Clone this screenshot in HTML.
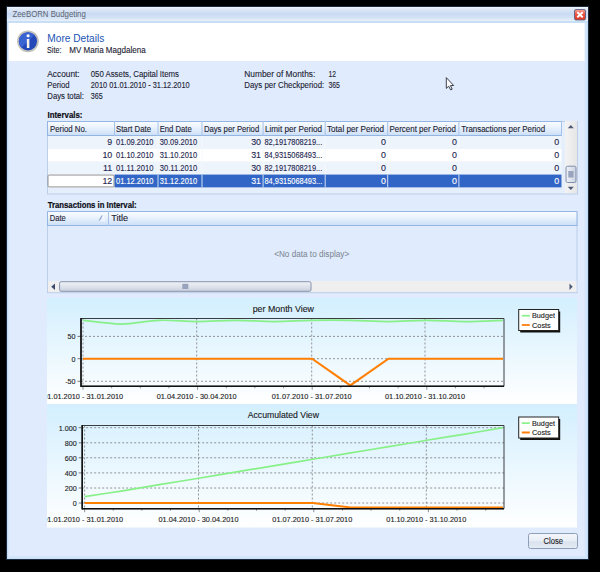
<!DOCTYPE html><html><head><meta charset="utf-8"><style>html,body{margin:0;padding:0;background:#000;width:600px;height:572px;overflow:hidden}</style></head><body><svg width="600" height="572" viewBox="0 0 600 572" style="display:block;font-family:'Liberation Sans', sans-serif"><defs>
<linearGradient id="tb" x1="0" y1="0" x2="0" y2="1">
 <stop offset="0" stop-color="#f4f8fd"/><stop offset="0.13" stop-color="#e0e9f6"/>
 <stop offset="0.45" stop-color="#c9dbf3"/><stop offset="0.7" stop-color="#d3e2f5"/><stop offset="0.88" stop-color="#e4edf8"/><stop offset="1" stop-color="#f2f7fd"/>
</linearGradient>
<linearGradient id="gh" x1="0" y1="0" x2="0" y2="1">
 <stop offset="0" stop-color="#fbfdff"/><stop offset="0.4" stop-color="#ebf3fd"/><stop offset="1" stop-color="#cadef8"/>
</linearGradient>
<linearGradient id="cbg" x1="0" y1="0" x2="0" y2="1">
 <stop offset="0" stop-color="#d3effe"/><stop offset="1" stop-color="#ffffff"/>
</linearGradient>
<linearGradient id="btn" x1="0" y1="0" x2="0" y2="1">
 <stop offset="0" stop-color="#f4f7fb"/><stop offset="0.5" stop-color="#e8eef6"/><stop offset="0.55" stop-color="#d9e2ee"/><stop offset="1" stop-color="#e4ebf4"/>
</linearGradient>
<linearGradient id="close" x1="0" y1="0" x2="0" y2="1">
 <stop offset="0" stop-color="#f7a296"/><stop offset="0.45" stop-color="#ea5444"/><stop offset="1" stop-color="#dc3a26"/>
</linearGradient>
<radialGradient id="info" cx="0.4" cy="0.35" r="0.7">
 <stop offset="0" stop-color="#5a8ae8"/><stop offset="1" stop-color="#1a3fa8"/>
</radialGradient>
<linearGradient id="sb" x1="0" y1="0" x2="1" y2="0">
 <stop offset="0" stop-color="#f3f3f3"/><stop offset="1" stop-color="#e6e6e6"/>
</linearGradient>
<linearGradient id="thumbh" x1="0" y1="0" x2="0" y2="1">
 <stop offset="0" stop-color="#eef1f6"/><stop offset="0.5" stop-color="#dfe4ec"/><stop offset="1" stop-color="#c9d1de"/>
</linearGradient>
<linearGradient id="thumbv" x1="0" y1="0" x2="1" y2="0">
 <stop offset="0" stop-color="#eef1f6"/><stop offset="0.5" stop-color="#dfe4ec"/><stop offset="1" stop-color="#c9d1de"/>
</linearGradient>
</defs>
<rect x="0" y="0" width="600" height="572" fill="#000" />
<rect x="6" y="6" width="583" height="554" fill="#1c2a3e" />
<rect x="7" y="7" width="581" height="552" fill="#bcd6f5" />
<rect x="7.6" y="7.6" width="579.8" height="551" fill="#d2e5fb" />
<rect x="7" y="7" width="581" height="15" fill="url(#tb)" />
<rect x="7" y="21" width="581" height="2" fill="#c6dff6" />
<rect x="8.7" y="23" width="575.9" height="533.2" fill="#e0ecfd" />
<rect x="8.7" y="23" width="575.9" height="38" fill="#ffffff" />
<rect x="574.5" y="9.5" width="11" height="10.5" fill="url(#close)" rx="1.5" stroke="#4d5a80" stroke-width="0.8"/>
<path d="M577.3 12.3 L582.7 17.3 M582.7 12.3 L577.3 17.3" stroke="#fff" stroke-width="1.9"/>
<text x="12.5" y="17.2" font-size="9" fill="#5c6370" textLength="73.3" lengthAdjust="spacingAndGlyphs" >ZeeBORN Budgeting</text>
<circle cx="27.95" cy="41.3" r="10.9" fill="#c4c2bc"/>
<circle cx="27.95" cy="41.3" r="9.1" fill="#2448b8"/>
<path d="M21.5 34.9 A9.1 9.1 0 0 1 34.4 34.9 L21.5 47.7 A9.1 9.1 0 0 1 21.5 34.9 Z" fill="#3a64d2"/>
<circle cx="28.1" cy="35.8" r="1.55" fill="#fff"/>
<rect x="26.85" y="39" width="2.5" height="9.1" fill="#fff" rx="0.6"/>
<rect x="27.6" y="39.8" width="1" height="7.5" fill="#efe6cc" />
<text x="47.3" y="42.4" font-size="10.5" fill="#2153b5" textLength="57" lengthAdjust="spacingAndGlyphs" >More Details</text>
<text x="47.1" y="52.7" font-size="8.9" fill="#1d1d33" stroke="#1d1d33" stroke-width="0.12" textLength="14.3" lengthAdjust="spacingAndGlyphs" >Site:</text>
<text x="69.2" y="52.5" font-size="8.9" fill="#1d1d33" stroke="#1d1d33" stroke-width="0.12" textLength="76.5" lengthAdjust="spacingAndGlyphs" >MV Maria Magdalena</text>
<text x="47.3" y="76.7" font-size="8.9" fill="#1d1d33" stroke="#1d1d33" stroke-width="0.12" textLength="32.4" lengthAdjust="spacingAndGlyphs" >Account:</text>
<text x="47.3" y="87.6" font-size="8.9" fill="#1d1d33" stroke="#1d1d33" stroke-width="0.12" textLength="22.3" lengthAdjust="spacingAndGlyphs" >Period</text>
<text x="47.3" y="98.7" font-size="8.9" fill="#1d1d33" stroke="#1d1d33" stroke-width="0.12" textLength="36.7" lengthAdjust="spacingAndGlyphs" >Days total:</text>
<text x="90.7" y="76.7" font-size="8.9" fill="#1d1d33" stroke="#1d1d33" stroke-width="0.12" textLength="88.3" lengthAdjust="spacingAndGlyphs" >050 Assets, Capital Items</text>
<text x="90.7" y="87.6" font-size="8.9" fill="#1d1d33" stroke="#1d1d33" stroke-width="0.12" textLength="99" lengthAdjust="spacingAndGlyphs" >2010 01.01.2010 - 31.12.2010</text>
<text x="90.7" y="98.7" font-size="8.9" fill="#1d1d33" stroke="#1d1d33" stroke-width="0.12" textLength="12" lengthAdjust="spacingAndGlyphs" >365</text>
<text x="244.3" y="76.7" font-size="8.9" fill="#1d1d33" stroke="#1d1d33" stroke-width="0.12" textLength="71" lengthAdjust="spacingAndGlyphs" >Number of Months:</text>
<text x="244.3" y="87.6" font-size="8.9" fill="#1d1d33" stroke="#1d1d33" stroke-width="0.12" textLength="80" lengthAdjust="spacingAndGlyphs" >Days per Checkperiod:</text>
<text x="328.4" y="76.7" font-size="8.9" fill="#1d1d33" stroke="#1d1d33" stroke-width="0.12" textLength="7.6" lengthAdjust="spacingAndGlyphs" >12</text>
<text x="328.4" y="87.6" font-size="8.9" fill="#1d1d33" stroke="#1d1d33" stroke-width="0.12" textLength="11.6" lengthAdjust="spacingAndGlyphs" >365</text>
<path d="M446.3 77.6 L446.3 88.4 L448.7 86.2 L450.6 89.9 L452.2 89.2 L450.4 85.6 L453.7 85.5 Z" fill="#fdfdfd" stroke="#3b404c" stroke-width="1" stroke-linejoin="round"/>
<text x="47.5" y="117.7" font-size="8.9" fill="#0c0c14" stroke="#0c0c14" stroke-width="0.2" textLength="35" lengthAdjust="spacingAndGlyphs" font-weight="bold" >Intervals:</text>
<rect x="47.5" y="121.5" width="530" height="72.5" fill="#e5eefb" stroke="#bccee8" stroke-width="1"/>
<rect x="47.5" y="121" width="514" height="15" fill="url(#gh)" />
<line x1="47" y1="121.5" x2="562" y2="121.5" stroke="#93b5e3" stroke-width="1"/>
<line x1="47.5" y1="121" x2="47.5" y2="136" stroke="#93b5e3" stroke-width="1"/>
<line x1="47" y1="135.5" x2="562" y2="135.5" stroke="#93b5e3" stroke-width="1"/>
<line x1="114.5" y1="121" x2="114.5" y2="136" stroke="#a6c2e8" stroke-width="1"/>
<line x1="158" y1="121" x2="158" y2="136" stroke="#a6c2e8" stroke-width="1"/>
<line x1="202" y1="121" x2="202" y2="136" stroke="#a6c2e8" stroke-width="1"/>
<line x1="263.1" y1="121" x2="263.1" y2="136" stroke="#a6c2e8" stroke-width="1"/>
<line x1="325.2" y1="121" x2="325.2" y2="136" stroke="#a6c2e8" stroke-width="1"/>
<line x1="387.7" y1="121" x2="387.7" y2="136" stroke="#a6c2e8" stroke-width="1"/>
<line x1="458.9" y1="121" x2="458.9" y2="136" stroke="#a6c2e8" stroke-width="1"/>
<line x1="561.5" y1="121" x2="561.5" y2="136" stroke="#a6c2e8" stroke-width="1"/>
<text x="50" y="131.8" font-size="8.9" fill="#1d1d33" stroke="#1d1d33" stroke-width="0.12" textLength="37" lengthAdjust="spacingAndGlyphs" >Period No.</text>
<text x="116" y="131.8" font-size="8.9" fill="#1d1d33" stroke="#1d1d33" stroke-width="0.12" textLength="35" lengthAdjust="spacingAndGlyphs" >Start Date</text>
<text x="159.7" y="131.8" font-size="8.9" fill="#1d1d33" stroke="#1d1d33" stroke-width="0.12" textLength="32" lengthAdjust="spacingAndGlyphs" >End Date</text>
<text x="203.9" y="131.8" font-size="8.9" fill="#1d1d33" stroke="#1d1d33" stroke-width="0.12" textLength="55.3" lengthAdjust="spacingAndGlyphs" >Days per Period</text>
<text x="265" y="131.8" font-size="8.9" fill="#1d1d33" stroke="#1d1d33" stroke-width="0.12" textLength="57" lengthAdjust="spacingAndGlyphs" >Limit per Period</text>
<text x="327" y="131.8" font-size="8.9" fill="#1d1d33" stroke="#1d1d33" stroke-width="0.12" textLength="57" lengthAdjust="spacingAndGlyphs" >Total per Period</text>
<text x="389.5" y="131.8" font-size="8.9" fill="#1d1d33" stroke="#1d1d33" stroke-width="0.12" textLength="66.3" lengthAdjust="spacingAndGlyphs" >Percent per Period</text>
<text x="461.2" y="131.8" font-size="8.9" fill="#1d1d33" stroke="#1d1d33" stroke-width="0.12" textLength="84" lengthAdjust="spacingAndGlyphs" >Transactions per Period</text>
<rect x="48" y="136.0" width="513.5" height="12.85" fill="#eef4fc" />
<line x1="158" y1="136.0" x2="158" y2="148.85" stroke="#f4f8fd" stroke-width="1"/>
<line x1="202" y1="136.0" x2="202" y2="148.85" stroke="#f4f8fd" stroke-width="1"/>
<line x1="263.1" y1="136.0" x2="263.1" y2="148.85" stroke="#f4f8fd" stroke-width="1"/>
<line x1="325.2" y1="136.0" x2="325.2" y2="148.85" stroke="#f4f8fd" stroke-width="1"/>
<line x1="387.7" y1="136.0" x2="387.7" y2="148.85" stroke="#f4f8fd" stroke-width="1"/>
<line x1="458.9" y1="136.0" x2="458.9" y2="148.85" stroke="#f4f8fd" stroke-width="1"/>
<text x="112.3" y="145.4" font-size="8.9" fill="#24264f" stroke="#24264f" stroke-width="0.12" text-anchor="end" >9</text>
<text x="116" y="145.4" font-size="8.9" fill="#24264f" stroke="#24264f" stroke-width="0.12" textLength="37.5" lengthAdjust="spacingAndGlyphs" >01.09.2010</text>
<text x="159.7" y="145.4" font-size="8.9" fill="#24264f" stroke="#24264f" stroke-width="0.12" textLength="37.5" lengthAdjust="spacingAndGlyphs" >30.09.2010</text>
<text x="261" y="145.4" font-size="8.9" fill="#24264f" stroke="#24264f" stroke-width="0.12" text-anchor="end" >30</text>
<text x="264.5" y="145.4" font-size="8.9" fill="#24264f" stroke="#24264f" stroke-width="0.12" textLength="57.7" lengthAdjust="spacingAndGlyphs" >82,1917808219...</text>
<text x="386" y="145.4" font-size="8.9" fill="#24264f" stroke="#24264f" stroke-width="0.12" text-anchor="end" >0</text>
<text x="457" y="145.4" font-size="8.9" fill="#24264f" stroke="#24264f" stroke-width="0.12" text-anchor="end" >0</text>
<text x="559.2" y="145.4" font-size="8.9" fill="#24264f" stroke="#24264f" stroke-width="0.12" text-anchor="end" >0</text>
<rect x="48" y="148.85" width="513.5" height="12.85" fill="#ffffff" />
<line x1="158" y1="148.85" x2="158" y2="161.7" stroke="#f4f8fd" stroke-width="1"/>
<line x1="202" y1="148.85" x2="202" y2="161.7" stroke="#f4f8fd" stroke-width="1"/>
<line x1="263.1" y1="148.85" x2="263.1" y2="161.7" stroke="#f4f8fd" stroke-width="1"/>
<line x1="325.2" y1="148.85" x2="325.2" y2="161.7" stroke="#f4f8fd" stroke-width="1"/>
<line x1="387.7" y1="148.85" x2="387.7" y2="161.7" stroke="#f4f8fd" stroke-width="1"/>
<line x1="458.9" y1="148.85" x2="458.9" y2="161.7" stroke="#f4f8fd" stroke-width="1"/>
<text x="112.3" y="158.25" font-size="8.9" fill="#24264f" stroke="#24264f" stroke-width="0.12" text-anchor="end" >10</text>
<text x="116" y="158.25" font-size="8.9" fill="#24264f" stroke="#24264f" stroke-width="0.12" textLength="37.5" lengthAdjust="spacingAndGlyphs" >01.10.2010</text>
<text x="159.7" y="158.25" font-size="8.9" fill="#24264f" stroke="#24264f" stroke-width="0.12" textLength="37.5" lengthAdjust="spacingAndGlyphs" >31.10.2010</text>
<text x="261" y="158.25" font-size="8.9" fill="#24264f" stroke="#24264f" stroke-width="0.12" text-anchor="end" >31</text>
<text x="264.5" y="158.25" font-size="8.9" fill="#24264f" stroke="#24264f" stroke-width="0.12" textLength="57.7" lengthAdjust="spacingAndGlyphs" >84,9315068493...</text>
<text x="386" y="158.25" font-size="8.9" fill="#24264f" stroke="#24264f" stroke-width="0.12" text-anchor="end" >0</text>
<text x="457" y="158.25" font-size="8.9" fill="#24264f" stroke="#24264f" stroke-width="0.12" text-anchor="end" >0</text>
<text x="559.2" y="158.25" font-size="8.9" fill="#24264f" stroke="#24264f" stroke-width="0.12" text-anchor="end" >0</text>
<rect x="48" y="161.7" width="513.5" height="12.85" fill="#eef4fc" />
<line x1="158" y1="161.7" x2="158" y2="174.54999999999998" stroke="#f4f8fd" stroke-width="1"/>
<line x1="202" y1="161.7" x2="202" y2="174.54999999999998" stroke="#f4f8fd" stroke-width="1"/>
<line x1="263.1" y1="161.7" x2="263.1" y2="174.54999999999998" stroke="#f4f8fd" stroke-width="1"/>
<line x1="325.2" y1="161.7" x2="325.2" y2="174.54999999999998" stroke="#f4f8fd" stroke-width="1"/>
<line x1="387.7" y1="161.7" x2="387.7" y2="174.54999999999998" stroke="#f4f8fd" stroke-width="1"/>
<line x1="458.9" y1="161.7" x2="458.9" y2="174.54999999999998" stroke="#f4f8fd" stroke-width="1"/>
<text x="112.3" y="171.1" font-size="8.9" fill="#24264f" stroke="#24264f" stroke-width="0.12" text-anchor="end" >11</text>
<text x="116" y="171.1" font-size="8.9" fill="#24264f" stroke="#24264f" stroke-width="0.12" textLength="37.5" lengthAdjust="spacingAndGlyphs" >01.11.2010</text>
<text x="159.7" y="171.1" font-size="8.9" fill="#24264f" stroke="#24264f" stroke-width="0.12" textLength="37.5" lengthAdjust="spacingAndGlyphs" >30.11.2010</text>
<text x="261" y="171.1" font-size="8.9" fill="#24264f" stroke="#24264f" stroke-width="0.12" text-anchor="end" >30</text>
<text x="264.5" y="171.1" font-size="8.9" fill="#24264f" stroke="#24264f" stroke-width="0.12" textLength="57.7" lengthAdjust="spacingAndGlyphs" >82,1917808219...</text>
<text x="386" y="171.1" font-size="8.9" fill="#24264f" stroke="#24264f" stroke-width="0.12" text-anchor="end" >0</text>
<text x="457" y="171.1" font-size="8.9" fill="#24264f" stroke="#24264f" stroke-width="0.12" text-anchor="end" >0</text>
<text x="559.2" y="171.1" font-size="8.9" fill="#24264f" stroke="#24264f" stroke-width="0.12" text-anchor="end" >0</text>
<rect x="48" y="174.55" width="513.5" height="12.85" fill="#ffffff" />
<rect x="114.5" y="174.55" width="447" height="12.85" fill="#3166c6" />
<rect x="48" y="175.05" width="66" height="11.85" fill="#ffffff" stroke="#7a7a7a" stroke-width="0.8" rx="1"/>
<line x1="158" y1="174.55" x2="158" y2="187.4" stroke="#cfe0f5" stroke-width="1"/>
<line x1="202" y1="174.55" x2="202" y2="187.4" stroke="#cfe0f5" stroke-width="1"/>
<line x1="263.1" y1="174.55" x2="263.1" y2="187.4" stroke="#cfe0f5" stroke-width="1"/>
<line x1="325.2" y1="174.55" x2="325.2" y2="187.4" stroke="#cfe0f5" stroke-width="1"/>
<line x1="387.7" y1="174.55" x2="387.7" y2="187.4" stroke="#cfe0f5" stroke-width="1"/>
<line x1="458.9" y1="174.55" x2="458.9" y2="187.4" stroke="#cfe0f5" stroke-width="1"/>
<text x="112.3" y="183.95000000000002" font-size="8.9" fill="#24264f" stroke="#24264f" stroke-width="0.12" text-anchor="end" >12</text>
<text x="116" y="183.95000000000002" font-size="8.9" fill="#ffffff" stroke="#ffffff" stroke-width="0.12" textLength="37.5" lengthAdjust="spacingAndGlyphs" >01.12.2010</text>
<text x="159.7" y="183.95000000000002" font-size="8.9" fill="#ffffff" stroke="#ffffff" stroke-width="0.12" textLength="37.5" lengthAdjust="spacingAndGlyphs" >31.12.2010</text>
<text x="261" y="183.95000000000002" font-size="8.9" fill="#ffffff" stroke="#ffffff" stroke-width="0.12" text-anchor="end" >31</text>
<text x="264.5" y="183.95000000000002" font-size="8.9" fill="#ffffff" stroke="#ffffff" stroke-width="0.12" textLength="57.7" lengthAdjust="spacingAndGlyphs" >84,9315068493...</text>
<text x="386" y="183.95000000000002" font-size="8.9" fill="#ffffff" stroke="#ffffff" stroke-width="0.12" text-anchor="end" >0</text>
<text x="457" y="183.95000000000002" font-size="8.9" fill="#ffffff" stroke="#ffffff" stroke-width="0.12" text-anchor="end" >0</text>
<text x="559.2" y="183.95000000000002" font-size="8.9" fill="#ffffff" stroke="#ffffff" stroke-width="0.12" text-anchor="end" >0</text>
<rect x="565" y="121" width="12" height="72" fill="url(#sb)" />
<path d="M567.8 128.3 L570.8 125 L573.8 128.3 Z" fill="#4d5a75"/>
<path d="M567.8 186.8 L570.8 190 L573.8 186.8 Z" fill="#4d5a75"/>
<rect x="566" y="166.2" width="10" height="16.3" fill="url(#thumbv)" stroke="#7584a8" stroke-width="0.9" rx="1.5"/>
<rect x="568.3" y="171" width="5.2" height="6.5" fill="#98a4bd" />
<text x="47.7" y="207.7" font-size="8.9" fill="#0c0c14" stroke="#0c0c14" stroke-width="0.2" textLength="89" lengthAdjust="spacingAndGlyphs" font-weight="bold" >Transactions in Interval:</text>
<rect x="47.5" y="211.5" width="529.5" height="81.2" fill="#e0ecfd" stroke="#bccee8" stroke-width="1"/>
<rect x="47.5" y="211" width="529.5" height="15" fill="url(#gh)" />
<path d="M47.5 226 L47.5 211.5 L577 211.5 M577 211.5 L577 226" fill="none" stroke="#93b5e3" stroke-width="1"/>
<line x1="47" y1="225.5" x2="577" y2="225.5" stroke="#93b5e3" stroke-width="1"/>
<line x1="108.5" y1="211" x2="108.5" y2="226" stroke="#a6c2e8" stroke-width="1"/>
<text x="49.8" y="221.2" font-size="8.9" fill="#1d1d33" stroke="#1d1d33" stroke-width="0.12" textLength="16" lengthAdjust="spacingAndGlyphs" >Date</text>
<path d="M99.3 220.6 L102.4 215.2" stroke="#8ba3d3" stroke-width="1.1"/><path d="M102.6 215.6 L104.6 220.4 L100.5 220.4" fill="none" stroke="#ffffff" stroke-width="0.8"/>
<text x="111.2" y="221.2" font-size="8.9" fill="#1d1d33" stroke="#1d1d33" stroke-width="0.12" textLength="17" lengthAdjust="spacingAndGlyphs" >Title</text>
<text x="274.2" y="256.8" font-size="8.9" fill="#7f8794" stroke="#7f8794" stroke-width="0.05" textLength="75" lengthAdjust="spacingAndGlyphs" >&lt;No data to display&gt;</text>
<rect x="48" y="281" width="528.5" height="11" fill="#efefef" />
<path d="M55 283.6 L51.2 286.75 L55 289.9 Z" fill="#3d4a6a"/>
<path d="M569.5 283.5 L572.7 286.7 L569.5 289.9 Z" fill="#4d5a75"/>
<rect x="59.6" y="281.7" width="251.4" height="9.6" fill="url(#thumbh)" stroke="#7f8aa6" stroke-width="0.9" rx="1.5"/>
<rect x="182.3" y="283.8" width="6" height="5.2" fill="#98a4bd" />
<clipPath id="clip1"><rect x="47" y="298" width="530" height="106"/></clipPath>
<rect x="47" y="298" width="530" height="106" fill="url(#cbg)" />
<g clip-path="url(#clip1)">
<text x="252.7" y="311.7" font-size="8.6" fill="#1a1a1a" stroke="#1a1a1a" stroke-width="0.12" textLength="61.3" lengthAdjust="spacingAndGlyphs" >per Month View</text>
<line x1="81" y1="336.4" x2="504" y2="336.4" stroke="#7a7a7a" stroke-width="0.8" stroke-dasharray="2,2"/>
<line x1="77.5" y1="336.4" x2="81" y2="336.4" stroke="#555" stroke-width="0.8"/>
<text x="75.6" y="339.29999999999995" font-size="7.9" fill="#1a1a1a" stroke="#1a1a1a" stroke-width="0.12" textLength="7.99" lengthAdjust="spacingAndGlyphs" text-anchor="end" >50</text>
<line x1="81" y1="358.7" x2="504" y2="358.7" stroke="#7a7a7a" stroke-width="0.8" stroke-dasharray="2,2"/>
<line x1="77.5" y1="358.7" x2="81" y2="358.7" stroke="#555" stroke-width="0.8"/>
<text x="75.6" y="361.59999999999997" font-size="7.9" fill="#1a1a1a" stroke="#1a1a1a" stroke-width="0.12" textLength="3.99" lengthAdjust="spacingAndGlyphs" text-anchor="end" >0</text>
<line x1="81" y1="381.3" x2="504" y2="381.3" stroke="#7a7a7a" stroke-width="0.8" stroke-dasharray="2,2"/>
<line x1="77.5" y1="381.3" x2="81" y2="381.3" stroke="#555" stroke-width="0.8"/>
<text x="75.6" y="384.2" font-size="7.9" fill="#1a1a1a" stroke="#1a1a1a" stroke-width="0.12" textLength="10.38" lengthAdjust="spacingAndGlyphs" text-anchor="end" >-50</text>
<line x1="83" y1="318.5" x2="83" y2="386.3" stroke="#7a7a7a" stroke-width="0.8" stroke-dasharray="2,2"/>
<line x1="196.7" y1="318.5" x2="196.7" y2="386.3" stroke="#7a7a7a" stroke-width="0.8" stroke-dasharray="2,2"/>
<line x1="311.7" y1="318.5" x2="311.7" y2="386.3" stroke="#7a7a7a" stroke-width="0.8" stroke-dasharray="2,2"/>
<line x1="425" y1="318.5" x2="425" y2="386.3" stroke="#7a7a7a" stroke-width="0.8" stroke-dasharray="2,2"/>
<line x1="83.0" y1="386.3" x2="83.0" y2="389.8" stroke="#777" stroke-width="0.8"/>
<line x1="111.65" y1="386.3" x2="111.65" y2="388.3" stroke="#777" stroke-width="0.8"/>
<line x1="140.3" y1="386.3" x2="140.3" y2="388.3" stroke="#777" stroke-width="0.8"/>
<line x1="168.95" y1="386.3" x2="168.95" y2="388.3" stroke="#777" stroke-width="0.8"/>
<line x1="197.6" y1="386.3" x2="197.6" y2="389.8" stroke="#777" stroke-width="0.8"/>
<line x1="226.25" y1="386.3" x2="226.25" y2="388.3" stroke="#777" stroke-width="0.8"/>
<line x1="254.89999999999998" y1="386.3" x2="254.89999999999998" y2="388.3" stroke="#777" stroke-width="0.8"/>
<line x1="283.54999999999995" y1="386.3" x2="283.54999999999995" y2="388.3" stroke="#777" stroke-width="0.8"/>
<line x1="312.2" y1="386.3" x2="312.2" y2="389.8" stroke="#777" stroke-width="0.8"/>
<line x1="340.84999999999997" y1="386.3" x2="340.84999999999997" y2="388.3" stroke="#777" stroke-width="0.8"/>
<line x1="369.5" y1="386.3" x2="369.5" y2="388.3" stroke="#777" stroke-width="0.8"/>
<line x1="398.15" y1="386.3" x2="398.15" y2="388.3" stroke="#777" stroke-width="0.8"/>
<line x1="426.79999999999995" y1="386.3" x2="426.79999999999995" y2="389.8" stroke="#777" stroke-width="0.8"/>
<line x1="455.45" y1="386.3" x2="455.45" y2="388.3" stroke="#777" stroke-width="0.8"/>
<line x1="484.09999999999997" y1="386.3" x2="484.09999999999997" y2="388.3" stroke="#777" stroke-width="0.8"/>
<text x="83.2" y="398.7" font-size="8.1" fill="#1a1a1a" stroke="#1a1a1a" stroke-width="0.12" textLength="80" lengthAdjust="spacingAndGlyphs" text-anchor="middle" >01.01.2010 - 31.01.2010</text>
<text x="196.7" y="398.7" font-size="8.1" fill="#1a1a1a" stroke="#1a1a1a" stroke-width="0.12" textLength="80" lengthAdjust="spacingAndGlyphs" text-anchor="middle" >01.04.2010 - 30.04.2010</text>
<text x="311.7" y="398.7" font-size="8.1" fill="#1a1a1a" stroke="#1a1a1a" stroke-width="0.12" textLength="80" lengthAdjust="spacingAndGlyphs" text-anchor="middle" >01.07.2010 - 31.07.2010</text>
<text x="425" y="398.7" font-size="8.1" fill="#1a1a1a" stroke="#1a1a1a" stroke-width="0.12" textLength="80" lengthAdjust="spacingAndGlyphs" text-anchor="middle" >01.10.2010 - 31.10.2010</text>
<path d="M83.00 320.31 C89.36 320.93 108.45 324.03 121.18 324.03 C133.91 324.03 146.64 320.72 159.36 320.31 C172.09 319.90 184.82 321.55 197.55 321.55 C210.27 321.55 223.00 320.31 235.73 320.31 C248.45 320.31 261.18 321.55 273.91 321.55 C286.64 321.55 299.36 320.52 312.09 320.31 C324.82 320.10 337.55 320.10 350.27 320.31 C363.00 320.52 375.73 321.55 388.45 321.55 C401.18 321.55 413.91 320.31 426.64 320.31 C439.36 320.31 452.09 321.55 464.82 321.55 C477.55 321.55 496.64 320.52 503.00 320.31" fill="none" stroke="#88f088" stroke-width="1.7"/>
<polyline points="83.00,358.70 121.18,358.70 159.36,358.70 197.55,358.70 235.73,358.70 273.91,358.70 312.09,358.70 350.27,385.37 388.45,358.70 426.64,358.70 464.82,358.70 503.00,358.70" fill="none" stroke="#ff7f00" stroke-width="2.1" stroke-linejoin="miter"/>
<path d="M81 318.5 L504 318.5 L504 386.3 L81 386.3 Z" fill="none" stroke="#3a3d40" stroke-width="1"/>
<line x1="81" y1="318.0" x2="81" y2="387.1" stroke="#111" stroke-width="1.6"/>
<line x1="81" y1="386.3" x2="504" y2="386.3" stroke="#111" stroke-width="1.6"/>
<rect x="520.2" y="311.5" width="40" height="21" fill="#111" />
<rect x="518.7" y="309.5" width="40" height="21" fill="#ffffff" stroke="#222" stroke-width="1"/>
<line x1="521.8" y1="315.7" x2="529.8" y2="315.7" stroke="#8cf08c" stroke-width="1.8"/>
<line x1="521.8" y1="325.0" x2="529.8" y2="325.0" stroke="#ff7f0e" stroke-width="1.8"/>
<text x="532" y="318.0" font-size="7.4" fill="#1a1a1a" stroke="#1a1a1a" stroke-width="0.12" textLength="23" lengthAdjust="spacingAndGlyphs" >Budget</text>
<text x="532" y="327.5" font-size="7.4" fill="#1a1a1a" stroke="#1a1a1a" stroke-width="0.12" textLength="18.8" lengthAdjust="spacingAndGlyphs" >Costs</text>
</g>
<clipPath id="clip2"><rect x="47" y="404" width="530" height="123.5"/></clipPath>
<rect x="47" y="404" width="530" height="123.5" fill="url(#cbg)" />
<g clip-path="url(#clip2)">
<text x="247.7" y="418.3" font-size="8.6" fill="#1a1a1a" stroke="#1a1a1a" stroke-width="0.12" textLength="71.3" lengthAdjust="spacingAndGlyphs" >Accumulated View</text>
<line x1="82.2" y1="427.7" x2="504" y2="427.7" stroke="#7a7a7a" stroke-width="0.8" stroke-dasharray="2,2"/>
<line x1="78.7" y1="427.7" x2="82.2" y2="427.7" stroke="#555" stroke-width="0.8"/>
<text x="76.8" y="430.59999999999997" font-size="7.9" fill="#1a1a1a" stroke="#1a1a1a" stroke-width="0.12" textLength="17.98" lengthAdjust="spacingAndGlyphs" text-anchor="end" >1.000</text>
<line x1="82.2" y1="442.8" x2="504" y2="442.8" stroke="#7a7a7a" stroke-width="0.8" stroke-dasharray="2,2"/>
<line x1="78.7" y1="442.8" x2="82.2" y2="442.8" stroke="#555" stroke-width="0.8"/>
<text x="76.8" y="445.7" font-size="7.9" fill="#1a1a1a" stroke="#1a1a1a" stroke-width="0.12" textLength="11.98" lengthAdjust="spacingAndGlyphs" text-anchor="end" >800</text>
<line x1="82.2" y1="457.8" x2="504" y2="457.8" stroke="#7a7a7a" stroke-width="0.8" stroke-dasharray="2,2"/>
<line x1="78.7" y1="457.8" x2="82.2" y2="457.8" stroke="#555" stroke-width="0.8"/>
<text x="76.8" y="460.7" font-size="7.9" fill="#1a1a1a" stroke="#1a1a1a" stroke-width="0.12" textLength="11.98" lengthAdjust="spacingAndGlyphs" text-anchor="end" >600</text>
<line x1="82.2" y1="472.9" x2="504" y2="472.9" stroke="#7a7a7a" stroke-width="0.8" stroke-dasharray="2,2"/>
<line x1="78.7" y1="472.9" x2="82.2" y2="472.9" stroke="#555" stroke-width="0.8"/>
<text x="76.8" y="475.79999999999995" font-size="7.9" fill="#1a1a1a" stroke="#1a1a1a" stroke-width="0.12" textLength="11.98" lengthAdjust="spacingAndGlyphs" text-anchor="end" >400</text>
<line x1="82.2" y1="488" x2="504" y2="488" stroke="#7a7a7a" stroke-width="0.8" stroke-dasharray="2,2"/>
<line x1="78.7" y1="488" x2="82.2" y2="488" stroke="#555" stroke-width="0.8"/>
<text x="76.8" y="490.9" font-size="7.9" fill="#1a1a1a" stroke="#1a1a1a" stroke-width="0.12" textLength="11.98" lengthAdjust="spacingAndGlyphs" text-anchor="end" >200</text>
<line x1="82.2" y1="503" x2="504" y2="503" stroke="#7a7a7a" stroke-width="0.8" stroke-dasharray="2,2"/>
<line x1="78.7" y1="503" x2="82.2" y2="503" stroke="#555" stroke-width="0.8"/>
<text x="76.8" y="505.9" font-size="7.9" fill="#1a1a1a" stroke="#1a1a1a" stroke-width="0.12" textLength="3.99" lengthAdjust="spacingAndGlyphs" text-anchor="end" >0</text>
<line x1="84.6" y1="425.5" x2="84.6" y2="508.7" stroke="#7a7a7a" stroke-width="0.8" stroke-dasharray="2,2"/>
<line x1="198.5" y1="425.5" x2="198.5" y2="508.7" stroke="#7a7a7a" stroke-width="0.8" stroke-dasharray="2,2"/>
<line x1="312.3" y1="425.5" x2="312.3" y2="508.7" stroke="#7a7a7a" stroke-width="0.8" stroke-dasharray="2,2"/>
<line x1="426.3" y1="425.5" x2="426.3" y2="508.7" stroke="#7a7a7a" stroke-width="0.8" stroke-dasharray="2,2"/>
<line x1="84.6" y1="508.7" x2="84.6" y2="512.2" stroke="#777" stroke-width="0.8"/>
<line x1="113.25" y1="508.7" x2="113.25" y2="510.7" stroke="#777" stroke-width="0.8"/>
<line x1="141.89999999999998" y1="508.7" x2="141.89999999999998" y2="510.7" stroke="#777" stroke-width="0.8"/>
<line x1="170.54999999999998" y1="508.7" x2="170.54999999999998" y2="510.7" stroke="#777" stroke-width="0.8"/>
<line x1="199.2" y1="508.7" x2="199.2" y2="512.2" stroke="#777" stroke-width="0.8"/>
<line x1="227.85" y1="508.7" x2="227.85" y2="510.7" stroke="#777" stroke-width="0.8"/>
<line x1="256.5" y1="508.7" x2="256.5" y2="510.7" stroke="#777" stroke-width="0.8"/>
<line x1="285.15" y1="508.7" x2="285.15" y2="510.7" stroke="#777" stroke-width="0.8"/>
<line x1="313.79999999999995" y1="508.7" x2="313.79999999999995" y2="512.2" stroke="#777" stroke-width="0.8"/>
<line x1="342.44999999999993" y1="508.7" x2="342.44999999999993" y2="510.7" stroke="#777" stroke-width="0.8"/>
<line x1="371.1" y1="508.7" x2="371.1" y2="510.7" stroke="#777" stroke-width="0.8"/>
<line x1="399.75" y1="508.7" x2="399.75" y2="510.7" stroke="#777" stroke-width="0.8"/>
<line x1="428.4" y1="508.7" x2="428.4" y2="512.2" stroke="#777" stroke-width="0.8"/>
<line x1="457.04999999999995" y1="508.7" x2="457.04999999999995" y2="510.7" stroke="#777" stroke-width="0.8"/>
<line x1="485.69999999999993" y1="508.7" x2="485.69999999999993" y2="510.7" stroke="#777" stroke-width="0.8"/>
<text x="83.2" y="521.6" font-size="8.1" fill="#1a1a1a" stroke="#1a1a1a" stroke-width="0.12" textLength="80" lengthAdjust="spacingAndGlyphs" text-anchor="middle" >01.01.2010 - 31.01.2010</text>
<text x="198.5" y="521.6" font-size="8.1" fill="#1a1a1a" stroke="#1a1a1a" stroke-width="0.12" textLength="80" lengthAdjust="spacingAndGlyphs" text-anchor="middle" >01.04.2010 - 30.04.2010</text>
<text x="312.3" y="521.6" font-size="8.1" fill="#1a1a1a" stroke="#1a1a1a" stroke-width="0.12" textLength="80" lengthAdjust="spacingAndGlyphs" text-anchor="middle" >01.07.2010 - 31.07.2010</text>
<text x="426.3" y="521.6" font-size="8.1" fill="#1a1a1a" stroke="#1a1a1a" stroke-width="0.12" textLength="80" lengthAdjust="spacingAndGlyphs" text-anchor="middle" >01.10.2010 - 31.10.2010</text>
<path d="M84.60 496.60 C90.94 495.64 109.96 492.86 122.64 490.83 C135.32 488.80 147.99 486.53 160.67 484.43 C173.35 482.34 186.03 480.34 198.71 478.24 C211.39 476.15 224.07 473.95 236.75 471.85 C249.42 469.75 262.10 467.76 274.78 465.66 C287.46 463.56 300.14 461.40 312.82 459.26 C325.50 457.13 338.18 454.97 350.85 452.87 C363.53 450.77 376.21 448.78 388.89 446.68 C401.57 444.58 414.25 442.38 426.93 440.28 C439.61 438.19 452.28 436.19 464.96 434.10 C477.64 432.00 496.66 428.77 503.00 427.70" fill="none" stroke="#88f088" stroke-width="1.7"/>
<polyline points="84.60,503.00 122.64,503.00 160.67,503.00 198.71,503.00 236.75,503.00 274.78,503.00 312.82,503.00 350.85,507.44 388.89,507.44 426.93,507.44 464.96,507.44 503.00,507.44" fill="none" stroke="#ff7f00" stroke-width="2.1" stroke-linejoin="miter"/>
<path d="M82.2 425.5 L504 425.5 L504 508.7 L82.2 508.7 Z" fill="none" stroke="#3a3d40" stroke-width="1"/>
<line x1="82.2" y1="425.0" x2="82.2" y2="509.5" stroke="#111" stroke-width="1.6"/>
<line x1="82.2" y1="508.7" x2="504" y2="508.7" stroke="#111" stroke-width="1.6"/>
<rect x="520.2" y="419" width="40" height="21" fill="#111" />
<rect x="518.7" y="417" width="40" height="21" fill="#ffffff" stroke="#222" stroke-width="1"/>
<line x1="521.8" y1="423.2" x2="529.8" y2="423.2" stroke="#8cf08c" stroke-width="1.8"/>
<line x1="521.8" y1="432.5" x2="529.8" y2="432.5" stroke="#ff7f0e" stroke-width="1.8"/>
<text x="532" y="425.5" font-size="7.4" fill="#1a1a1a" stroke="#1a1a1a" stroke-width="0.12" textLength="23" lengthAdjust="spacingAndGlyphs" >Budget</text>
<text x="532" y="435" font-size="7.4" fill="#1a1a1a" stroke="#1a1a1a" stroke-width="0.12" textLength="18.8" lengthAdjust="spacingAndGlyphs" >Costs</text>
</g>
<rect x="528.5" y="533.5" width="49" height="15" fill="url(#btn)" stroke="#8e9db8" stroke-width="1" rx="2"/>
<text x="543.5" y="543.8" font-size="8.9" fill="#1e1e1e" stroke="#1e1e1e" stroke-width="0.12" textLength="19.5" lengthAdjust="spacingAndGlyphs" >Close</text></svg></body></html>
